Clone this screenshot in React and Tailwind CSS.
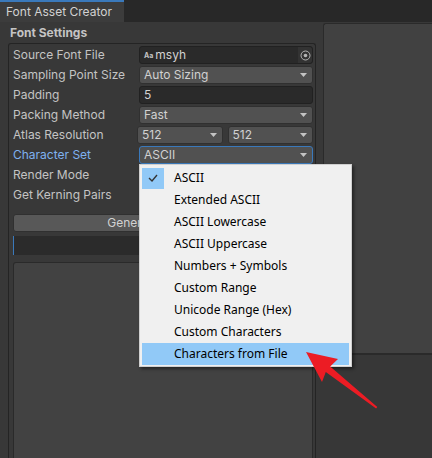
import React from "react"

const menuItems = [
  "ASCII",
  "Extended ASCII",
  "ASCII Lowercase",
  "ASCII Uppercase",
  "Numbers + Symbols",
  "Custom Range",
  "Unicode Range (Hex)",
  "Custom Characters",
  "Characters from File",
]

function Arrow() {
  return (
    <svg width="7" height="4" viewBox="0 0 7 4" className="shrink-0">
      <polygon points="0,0 7,0 3.5,4" fill="#c4c4c4" />
    </svg>
  )
}

function Dropdown({ value, focused, className = "" }) {
  return (
    <div
      className={
        "h-[18px] flex items-center justify-between pl-[4px] pr-[5px] rounded-[3px] bg-[#515151] border text-[#d2d2d2] " +
        (focused ? "border-[#3a79bb]" : "border-[#303030]") +
        " " + className
      }
    >
      <span>{value}</span>
      <Arrow />
    </div>
  )
}

function Row({ label, blue, children }) {
  return (
    <div className="h-[20px] flex items-center">
      <div className={"w-[126px] shrink-0 " + (blue ? "text-[#7fb1ef]" : "text-[#c4c4c4]")}>{label}</div>
      <div className="flex-1 min-w-0">{children}</div>
    </div>
  )
}

export default function App() {
  return (
    <div
      className="relative w-[432px] h-[458px] overflow-hidden bg-[#383838] text-[12px] leading-none"
      style={{ fontFamily: "Inter, 'Liberation Sans', sans-serif" }}
    >
      {/* Tab bar */}
      <div className="h-[22px] bg-[#282828] flex">
        <div className="w-[124px] bg-[#3c3c3c] border-t-2 border-[#3a79bb] flex items-center pl-[6px] text-[#d2d2d2]">
          Font Asset Creator
        </div>
      </div>

      <div className="flex h-[436px]">
        {/* Left: settings */}
        <div className="w-[316px] flex flex-col shrink-0">
          <div className="h-[21px] flex items-center pl-[10px] font-bold text-[#c4c4c4]">Font Settings</div>
          <div className="ml-[8px] flex-1 border border-b-0 border-[#242424] rounded-t-[3px] pl-[4px] pr-[2px] pt-[1px] flex flex-col">
            <Row label="Source Font File">
              <div className="h-[18px] flex items-center rounded-[3px] bg-[#2a2a2a] border border-[#212121] text-[#d2d2d2]">
                <span className="pl-[4px] pr-[2px] text-[7px] font-bold text-[#c4c4c4]">Aa</span>
                <span className="flex-1">msyh</span>
                <div className="w-[14px] h-full bg-[#333333] flex items-center justify-center rounded-r-[3px]">
                  <svg width="11" height="11" viewBox="0 0 11 11">
                    <circle cx="5.5" cy="5.5" r="4.5" fill="none" stroke="#b4b4b4" strokeWidth="1" />
                    <circle cx="5.5" cy="5.5" r="1.8" fill="#b4b4b4" />
                  </svg>
                </div>
              </div>
            </Row>
            <Row label="Sampling Point Size">
              <Dropdown value="Auto Sizing" />
            </Row>
            <Row label="Padding">
              <div className="h-[18px] flex items-center pl-[4px] rounded-[3px] bg-[#2a2a2a] border border-[#212121] text-[#d2d2d2]">5</div>
            </Row>
            <Row label="Packing Method">
              <Dropdown value="Fast" />
            </Row>
            <Row label="Atlas Resolution">
              <div className="flex gap-[5px] -ml-[2px]">
                <Dropdown value="512" className="flex-1 pl-[3px]" />
                <Dropdown value="512" className="flex-1" />
              </div>
            </Row>
            <Row label="Character Set" blue>
              <Dropdown value="ASCII" focused />
            </Row>
            <Row label="Render Mode" />
            <Row label="Get Kerning Pairs" />

            <div className="mt-[9px] h-[18px] rounded-[3px] bg-[#585858] border border-[#303030] flex items-center justify-center text-[#d2d2d2]">
              Generate Font Atlas
            </div>
            <div className="mt-[4px] h-[19px] bg-[#2b2b2b] border-l border-[#3a79bb]" />
            <div className="mt-[7px] flex-1 bg-[#424242] border border-b-0 border-[#2a2a2a] rounded-t-[3px]" />
          </div>
        </div>

        {/* Right: preview */}
        <div className="flex-1 flex flex-col">
          <div className="ml-[7px] mt-[1px] h-[331px] bg-[#414141] border border-r-0 border-[#2a2a2a] rounded-tl-[3px]" />
          <div className="flex-1 bg-[#373737] border-t border-[#2a2a2a]" />
        </div>
      </div>

      {/* Popup menu */}
      <div
        className="absolute left-[139px] top-[164px] w-[213px] h-[203px] bg-[#f0f0f0] border border-[#cfcfcf] shadow-[2px_2px_3px_rgba(0,0,0,0.45)] py-[2px] px-[2px] text-[12px] text-black"
        style={{ fontFamily: "'Noto Sans', 'Liberation Sans', sans-serif" }}
      >
        {menuItems.map((item, i) => {
          const checked = i === 0
          const hover = i === menuItems.length - 1
          return (
            <div key={item} className={"h-[22px] flex items-center " + (hover ? "bg-[#91c9f7]" : "")}>
              <div className={"w-[22px] h-[21px] flex items-center justify-center " + (checked ? "bg-[#91c9f7]" : "")}>
                {checked && (
                  <svg width="10" height="8" viewBox="0 0 10 8">
                    <polyline points="1,4 4,7 9,1" fill="none" stroke="#333" strokeWidth="1.4" />
                  </svg>
                )}
              </div>
              <span className="pl-[10px]">{item}</span>
            </div>
          )
        })}
      </div>

      {/* Red arrow annotation */}
      <svg className="absolute left-0 top-0 pointer-events-none" width="432" height="458">
        <polygon
          points="306,352 338,359 330.2,366.6 377.3,406.9 376.1,408.5 325.8,372 322,382"
          fill="#ec1c24"
        />
      </svg>
    </div>
  )
}
